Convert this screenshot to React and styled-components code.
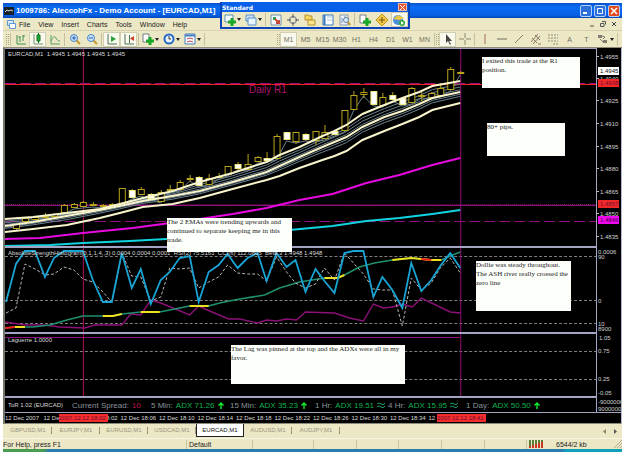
import React, { useState } from 'react'
import styled, { createGlobalStyle, css } from 'styled-components'

const GlobalStyle = createGlobalStyle`
  * { box-sizing: border-box; }
  body {
    margin: 0;
    background: #fff;
    font-family: "Liberation Sans", Arial, sans-serif;
    font-size: 7px;
    line-height: 9px;
    color: #222;
  }
  button {
    font: inherit;
    color: inherit;
    margin: 0;
    padding: 0;
    border: 0;
    background: none;
  }
  svg { display: block; }
`;

const sand = '#ece8c6'

const Window = styled.div`
  position: relative;
  margin: 3px 3px 0;
`;

const TitleBar = styled.header`
  display: flex;
  align-items: center;
  gap: 2px;
  height: 15px;
  padding: 0 2px 0 1px;
  color: #fff;
  background: linear-gradient(#0a50c8, #0a6cf4 25%, #0660e6 80%, #0448b8);
`;

const Title = styled.h1`
  flex: 1;
  margin: 0;
  font-size: 8px;
  line-height: 12px;
  font-weight: bold;
  white-space: nowrap;
`;

const CaptionButton = styled.button`
  display: grid;
  place-items: center;
  width: 12px;
  height: 12px;
  border: 1px solid #b8d0f8;
  border-radius: 2px;
  background: ${p => (p.$close ? '#e0491c' : '#2c70dc')};
`;

const CaptionButtons = styled.div`
  display: flex;
  gap: 2px;
`;

const MenuBar = styled.nav`
  display: flex;
  align-items: center;
  gap: 3px;
  height: 13px;
  padding: 0 5px 0 4px;
  background: ${sand};
  border-bottom: 1px solid #d4d0b0;
`;

const Menus = styled.div`
  display: flex;
  gap: 8px;
`;

const MenuItem = styled.button`
  white-space: nowrap;
`;

const ChildButtons = styled.div`
  display: flex;
  gap: 5px;
  margin-left: auto;
`;

const Toolbar = styled.div`
  display: flex;
  align-items: center;
  justify-content: space-between;
  height: 17px;
  padding: 0 3px;
  background: ${sand};
  border-bottom: 1px solid #8c8a78;
`;

const ToolGroup = styled.div`
  display: flex;
  align-items: center;
`;

const Grip = styled.span`
  width: 3px;
  height: 11px;
  border-left: 1px dotted #a8a488;
  border-right: 1px dotted #a8a488;
`;

const Divider = styled.span`
  width: 1px;
  height: 13px;
  margin: 0 1px;
  background: #c4c0a0;
`;

const ToolButton = styled.button`
  display: flex;
  align-items: center;
  justify-content: center;
  gap: 1px;
  width: ${p => (p.$menu ? 21 : 17)}px;
  height: 15px;
  color: #707060;
  font-size: 7px;
  ${p => p.$on && css`
    background: #faf9ee;
    box-shadow: inset 0 0 0 1px #d2ceb2;
  `}
`;

const Chart = styled.main`
  position: relative;
  background: #000;
  border-left: 2px solid #74746c;
  border-right: 1px solid #b8b8d0;
  border-bottom: 1px solid #8c8a78;
  color: #d8d8d8;
`;

const Pane = styled.section`
  position: relative;
  display: grid;
  grid-template-columns: minmax(0, 1fr) 24px;
  height: ${p => p.$height}px;
`;

const Plot = styled.svg`
  width: 100%;
  height: 100%;
  border-top: ${p => (p.$first ? 1 : 2)}px solid #a4a4c4;
  border-right: 1px solid #a4a4c4;
`;

const Scale = styled.svg`
  width: 24px;
  height: 100%;
  overflow: hidden;
  font-size: 6px;
  fill: #d0d0d0;
`;

const PaneLabel = styled.p`
  position: absolute;
  top: ${p => p.$top}px;
  left: 3px;
  margin: 0;
  font-size: 6px;
  line-height: 7px;
  white-space: pre;
`;

const LevelLabel = styled.span`
  position: absolute;
  top: 36px;
  left: 244px;
  font-size: 10px;
  line-height: 11px;
  color: #b01470;
`;

const Note = styled.aside`
  position: absolute;
  z-index: 1;
  top: ${p => p.$top}px;
  left: ${p => p.$left}px;
  width: ${p => p.$width}px;
  height: ${p => p.$height}px;
  background: #fdfffb;
  color: #222;
  font-family: "Liberation Serif", "Times New Roman", serif;
  font-size: 7px;
  line-height: 9px;
`;

const Trends = styled.div`
  display: flex;
  align-items: center;
  height: 100%;
  padding-left: 3px;
  border-top: 2px solid #a4a4c4;
  border-right: 1px solid #a4a4c4;
  font-size: 8px;
  white-space: nowrap;
`;

const TrendName = styled.span`
  width: 64px;
  font-size: 6px;
`;

const Spread = styled.span`
  width: 79px;
  color: #88949c;
`;

const SpreadValue = styled.b`
  margin-left: 3px;
  font-weight: normal;
  color: #c01058;
`;

const Trend = styled.span`
  display: flex;
  align-items: center;
  gap: 3px;
  width: ${p => p.$width}px;
  color: #88949c;
`;

const Adx = styled.b`
  font-weight: normal;
  color: #10b050;
`;

const TimeAxis = styled.div`
  position: relative;
  height: 11px;
  border-top: 1px solid #a4a4c4;
  font-size: 6px;
  line-height: 10px;
`;

const Ticks = styled.div`
  display: grid;
  grid-template-columns: repeat(12, minmax(0, 1fr));
  width: 75%;
  white-space: nowrap;
`;

const TimeMark = styled.span`
  position: absolute;
  top: 1px;
  left: ${p => p.$left}px;
  width: 49px;
  height: 8px;
  background: #f42c2c;
  color: #701030;
  line-height: 8px;
  white-space: nowrap;
`;

const Tabs = styled.div`
  display: flex;
  height: 14px;
  padding-left: 1px;
  background: ${sand};
`;

const Tab = styled.button`
  width: 48px;
  height: 13px;
  font-size: 6px;
  color: ${p => (p.$on ? '#111' : '#98947c')};
  ${p => (p.$on ? css`
    background: #fff;
    border: 1px solid #222;
    border-top: 0;
  ` : css`
    background: linear-gradient(#98947c, #98947c) right center / 1px 7px no-repeat;
  `)}
`;

const TabArrows = styled.div`
  display: flex;
  align-items: center;
  gap: 7px;
  margin-left: auto;
  padding-right: 4px;
`;

const StatusBar = styled.footer`
  display: grid;
  grid-template-columns: 183fr 66fr 61fr 43fr 42fr 43fr 43fr 42fr 96fr;
  align-items: center;
  height: 11px;
  background: ${sand};
  border-top: 1px solid #f8f6e4;
  white-space: nowrap;
`;

const StatusCell = styled.div`
  display: flex;
  align-items: center;
  gap: 13px;
  height: 9px;
  padding-left: ${p => (p.$first ? 0 : 2)}px;
  border-left: ${p => (p.$first ? 0 : 1)}px solid #c8c4a4;
`;

const SizeGrip = styled.svg`
  margin-left: auto;
`;

const Taskbar = styled.div`
  height: 3px;
  background: linear-gradient(90deg, #4c9c50 0 40px, #2c7cb0 46px 560px, #10a0b8 562px);
`;

const Floating = styled.div`
  position: absolute;
  z-index: 3;
  top: -1px;
  left: 217px;
  width: 190px;
  background: #0a44b8;
  padding: 0 2px 2px;
`;

const FloatingHead = styled.div`
  display: flex;
  align-items: center;
  justify-content: space-between;
  height: 10px;
  padding-right: 1px;
  background: #0860e8;
  color: #fff;
  font-family: "DejaVu Sans", sans-serif;
  font-size: 6px;
  font-weight: bold;
`;

const FloatingClose = styled.button`
  display: grid;
  place-items: center;
  width: 9px;
  height: 8px;
  background: #e0532c;
  border: 1px solid #f0b8a0;
`;

const FloatingBody = styled.div`
  display: flex;
  align-items: center;
  justify-content: space-between;
  height: 15px;
  background: ${sand};
`;

// 12x12 glyphs for the toolbars
const glyphs = {
  bars: <path d="M2 2v9h9M5 3v6M5 4H3.500M8 2v6M8 3h2" stroke="#3c8c50" fill="none" />,
  candles: <><path d="M2 1v10h9" stroke="#709070" fill="none" /><path d="M6.500 0v10" stroke="#107020" /><path d="M5 2h3v6H5z" fill="#18b030" stroke="#107020" /></>,
  line: <path d="M2 2v9h9M2 8c2-5 4-5 5-3s2 3 4 3" stroke="#58a060" fill="none" />,
  zoomIn: <><path d="M7 7l4 4" stroke="#c89828" strokeWidth="2" /><circle cx="5" cy="5" r="3.500" fill="#cce4fc" stroke="#4484cc" /><path d="M3 5h4M5 3v4" stroke="#2464b0" /></>,
  zoomOut: <><path d="M7 7l4 4" stroke="#c89828" strokeWidth="2" /><circle cx="5" cy="5" r="3.500" fill="#cce4fc" stroke="#4484cc" /><path d="M3 5h4" stroke="#2464b0" /></>,
  scroll: <><path d="M2 1v10h9" stroke="#507058" fill="none" /><path d="M5 3l5 3-5 3z" fill="#28a038" /></>,
  shift: <><path d="M2 1v10h9M6.500 2v8" stroke="#507058" fill="none" /><path d="M11 3L7 5.500 11 8z" fill="#d04020" /></>,
  addDoc: <><path d="M1 1h6v8H1z" fill="#fff" stroke="#708088" /><path d="M8 4v8M4 8h8" stroke="#18a828" strokeWidth="3" /></>,
  clock: <><circle cx="6" cy="6" r="4.500" fill="#e8f4ff" stroke="#2468c8" strokeWidth="2" /><path d="M6 3v3h2" stroke="#333" fill="none" /></>,
  template: <><path d="M1 1h10v10H1z" fill="#f4f8ff" stroke="#4880c0" /><path d="M1 2.500h10" stroke="#4880c0" strokeWidth="2" /><path d="M3 6l3-1 3 1M3 9l3-1 3 1" stroke="#c05050" fill="none" /></>,
  newChart: <><path d="M1 1h8v7H1z" fill="#f4faff" stroke="#5890b8" /><path d="M8 4v8M4 8h8" stroke="#18a828" strokeWidth="3" /></>,
  profiles: <><path d="M1 1h8v6H1z" fill="#c8e0f8" stroke="#5890c8" /><path d="M3 4h8v7H3z" fill="#e8f4ff" stroke="#5890c8" /></>,
  market: <><path d="M1 1h10v10H1z" fill="#f4fcff" stroke="#7090a8" /><path d="M3 3h3v3H3z" fill="#28a050" /><path d="M5 5l4 4M9 6v3H6" stroke="#c84838" strokeWidth="2" fill="none" /></>,
  target: <><circle cx="6" cy="6" r="3.500" fill="none" stroke="#687080" /><path d="M6 0v4M6 8v4M0 6h4M8 6h4" stroke="#505868" /></>,
  folder: <><path d="M1 3V1h3l1 1h3v4H1z" fill="#f8d860" stroke="#b89030" /><path d="M4 6h7v5H4z" fill="#fce888" stroke="#b89030" /></>,
  terminal: <><path d="M1 1h10v10H1z" fill="#fff" stroke="#3878c0" /><path d="M2.500 1v10" stroke="#3878c0" strokeWidth="2" /><path d="M5 3h5M5 6h5" stroke="#a8c0d8" /></>,
  tester: <><path d="M1 1h8v10H1z" fill="#e8f0f8" stroke="#8098b0" /><path d="M3 9V4M6 5V2" stroke="#8098b0" /><circle cx="7" cy="6" r="2.500" fill="#d8ecff" stroke="#6080a8" /><path d="M9 8l2 3" stroke="#c09030" strokeWidth="2" /></>,
  meta: <><path d="M6 0l6 6-6 6-6-6z" fill="#f4cc48" stroke="#c09020" /><path d="M6 3v6M3 6h6" stroke="#705010" /></>,
  expert: <><circle cx="5" cy="6" r="5" fill="#4890d8" /><path d="M0 5l5-4 6 3-4 2z" fill="#f0c848" /><circle cx="9" cy="9" r="3" fill="#28a838" /><path d="M8 7l3 2-3 2z" fill="#fff" /></>,
  cursor: <path d="M4 1v9l2-2 2 4 1-1-2-3h3z" fill="#444" />,
  cross: <path d="M6 0v5M6 7v5M0 6h5M7 6h5" stroke="#8c8870" />,
  vline: <path d="M6 1v10" stroke="#a06868" />,
  hline: <path d="M1 6h10" stroke="#706c60" />,
  trend: <path d="M2 10l8-8" stroke="#807c6c" />,
  channel: <path d="M1 9l7-8M3 11l7-8M2 5l5 5M5 2l5 5M8 11h3" stroke="#8c7868" />,
  fibo: <path d="M1 2h10M1 5h10M1 8h10M6 11h5" stroke="#908c78" strokeDasharray="2 1" />,
  label: <path d="M1 1h10v10H1z" stroke="#a8a488" fill="none" strokeDasharray="1 1" />,
  arrows: <><path d="M1 2h4v3H1zM6 7h4v3H6z" fill="#807c70" /><path d="M5 3l3 1-2 2M3 6l3 3" stroke="#807c70" fill="none" /></>,
}

function Glyph({ name, menu }) {
  return (
    <>
      <svg width="12" height="12" viewBox="0 0 12 12">{glyphs[name]}</svg>
      {menu && <svg width="4" height="3" viewBox="0 0 4 3"><path d="M0 0h4L2 3z" fill="#222" /></svg>}
    </>
  )
}

function Tool({ name, menu, on }) {
  return (
    <ToolButton $menu={menu} $on={on} aria-label={name}>
      <Glyph name={name} menu={menu} />
    </ToolButton>
  )
}

const upper = [[5, 219], [33, 217], [67, 213], [100, 209], [120, 204], [143, 198], [173, 191], [200, 182], [233, 173], [267, 162], [280, 155], [300, 147], [323, 136], [335, 131], [347, 125], [363, 114], [385, 105], [403, 98], [420, 92], [433, 86], [461, 81]]
const middle = [[5, 226], [33, 222], [67, 216], [100, 210], [120, 206], [143, 201], [173, 196], [200, 191], [233, 182], [267, 172], [280, 166], [300, 157], [323, 147], [335, 142], [347, 137], [363, 127], [385, 117], [403, 111], [420, 104], [433, 98], [461, 92]]
const lower = [[5, 232], [33, 229], [67, 225], [100, 218], [120, 213], [143, 207], [173, 204], [200, 198], [233, 189], [267, 180], [280, 176], [300, 168], [323, 160], [335, 156], [347, 151], [363, 140], [385, 131], [403, 124], [420, 117], [433, 110], [461, 103]]
const slow = [[5, 239], [40, 238], [83, 233], [133, 228], [163, 224], [200, 219], [233, 214], [267, 208], [300, 200], [333, 194], [367, 183], [400, 175], [433, 165], [461, 158]]
const slowest = [[5, 246], [50, 245], [83, 243], [130, 241], [167, 239], [290, 230], [333, 226], [367, 221], [400, 218], [433, 214], [461, 210]]

const blend = (a, b, t) => a.map(([x, y], i) => [x, y + (b[i][1] - y) * t])
const pts = list => list.map(p => p.join(',')).join(' ')

// top, bottom, high, low, filled
const candles = [
  [224, 228, 223, 229], [218, 221, 217, 222], [217, 219, 216, 220], [216, 217, 213, 219], [214, 216, 213, 217],
  [205, 212, 204, 212], [204, 207, 203, 208], [202, 206, 201, 206], [204, 205, 202, 206], [205, 206, 204, 207],
  [204, 205, 203, 206], [188, 203, 188, 205], [190, 197, 189, 197, 1], [189, 194, 187, 195], [194, 198, 193, 199, 1],
  [192, 201, 190, 202], [189, 190, 185, 191], [182, 189, 180, 190], [178, 179, 175, 181], [177, 185, 176, 185, 1],
  [178, 184, 174, 185], [176, 177, 173, 178], [166, 174, 166, 175], [164, 168, 162, 171, 1], [164, 169, 154, 169],
  [157, 161, 156, 162], [158, 160, 152, 163, 1], [136, 158, 134, 158], [132, 139, 132, 140, 1], [132, 141, 132, 144],
  [134, 139, 133, 141, 1], [131, 140, 131, 145], [132, 138, 125, 139], [131, 134, 130, 135, 1], [110, 130, 110, 131],
  [95, 109, 91, 110], [92, 94, 88, 98], [91, 104, 91, 105, 1], [97, 105, 93, 106], [95, 99, 92, 100, 1],
  [98, 104, 97, 105, 1], [88, 102, 87, 103], [95, 96, 91, 101], [93, 97, 92, 98], [88, 95, 83, 96],
  [69, 89, 67, 90], [72, 73, 71, 74],
]
const slot = i => Math.round(15.5 + i * 9.68)
const fast = candles.map((c, i) => [slot(i), c[1] + 2])

const rsi = [302, 264, 251, 251, 277, 258, 251, 251, 251, 280, 302, 302, 253, 288, 269, 304, 280, 272, 258, 256, 302, 272, 265, 254, 268, 258, 253, 281, 253, 267, 260, 292, 269, 281, 293, 253, 251, 251, 297, 277, 290, 308, 263, 291, 280, 266, 253, 268]
const cci = [313, 308, 264, 269, 275, 274, 267, 270, 279, 282, 292, 302, 253, 276, 277, 301, 297, 268, 269, 268, 288, 282, 277, 265, 273, 274, 274, 281, 257, 272, 283, 288, 284, 268, 280, 253, 263, 274, 289, 290, 290, 326, 278, 290, 283, 268, 258, 273]
const series = list => pts(list.map((y, i) => [slot(i - 1), y]))
const river = [[5, 328], [15, 327], [33, 327], [50, 325], [67, 320], [83, 316], [103, 316], [113, 316], [122, 314], [141, 312], [160, 312], [180, 308], [190, 306], [209, 306], [220, 303], [240, 299], [265, 295], [280, 288], [300, 282], [325, 278], [338, 278], [345, 275], [360, 267], [375, 263], [393, 260], [412, 258], [432, 260], [442, 260], [451, 256], [461, 252]]
const flat = ['15,327 25,327', '103,316 113,316 122,314', '141,312 160,312', '190,306 209,306', '325,278 338,278 345,275', '393,260 412,258 432,260 442,260']
const ashLow = [[5, 322], [25, 325], [44, 325], [60, 327], [85, 328], [95, 325], [122, 325], [131, 314], [141, 315], [151, 300], [161, 303], [190, 315], [199, 306], [210, 311], [229, 319], [240, 319], [258, 323], [267, 320], [277, 321], [287, 319], [297, 320], [306, 312], [335, 313], [350, 318], [364, 321], [374, 304], [384, 308], [393, 307], [403, 304], [413, 307], [422, 298], [451, 312], [461, 313]]

function Crosshair() {
  return (
    <g shapeRendering="crispEdges">
      <path d="M83.500 0V500" stroke="#b01058" />
      <path d="M461.500 0V500" stroke="#90107c" />
    </g>
  )
}

function PricePane() {
  return (
    <Pane $height={198}>
      <Plot $first viewBox="5 49 592 197" preserveAspectRatio="none">
        <g shapeRendering="crispEdges" fill="none">
          <path d="M5 83.500H597" stroke="#98107c" strokeDasharray="11 4" />
          <path d="M5 84.500H597" stroke="#f02020" />
          <path d="M5 205.500H597" stroke="#90107c" />
          <path d="M5 204.500H597" stroke="#80106c" strokeDasharray="1 1" />
          <path d="M5 221.500H597" stroke="#90107c" strokeDasharray="11 4" />
        </g>
        <Crosshair />
        <g fill="none" stroke="#6c8490">
          {[0.3, 0.55, 0.8].map(t => <polyline key={t} points={pts(blend(upper, middle, t))} />)}
          {[0.2, 0.4].map(t => <polyline key={t} points={pts(blend(middle, lower, t))} />)}
          <polyline points={pts(fast)} />
        </g>
        <g shapeRendering="crispEdges" stroke="#b8a418">
          {candles.map(([top, bottom, high, low, filled], i) => (
            <g key={i}>
              <path d={`M${slot(i) + 0.5} ${high}V${low}`} />
              <rect x={slot(i) - 2.5} y={top + 0.5} width="6" height={bottom - top} fill={filled ? '#fff' : '#000'} stroke={filled ? '#f0e878' : '#b8a418'} />
            </g>
          ))}
        </g>
        <g fill="none" strokeWidth="2">
          <polyline points={pts(upper)} stroke="#f8f4cc" />
          <polyline points={pts(middle)} stroke="#f8f4cc" />
          <polyline points={pts(lower)} stroke="#f8f4cc" />
          <polyline points={pts(slow)} stroke="#e808e0" />
          <polyline points={pts(slowest)} stroke="#10d4e0" />
        </g>
      </Plot>
      <Scale viewBox="0 49 24 198">
        {[['1.4955', 58], ['1.4940', 80], ['1.4925', 102], ['1.4910', 125], ['1.4895', 148], ['1.4880', 170], ['1.4865', 193], ['1.4850', 215], ['1.4835', 238]].map(([label, y]) => (
          <g key={label}><path d={`M0 ${y - 0.5}h2`} stroke="#c0c0c0" /><text x="3" y={y + 2}>{label}</text></g>
        ))}
        <rect x="1" y="68" width="21" height="8" fill="#fff" /><text x="3" y="74" fill="#111">1.4945</text>
        <rect x="1" y="80" width="21" height="8" fill="#f02828" /><text x="3" y="86" fill="#701030">1.4938</text>
        <rect x="1" y="201" width="21" height="8" fill="#f02828" /><text x="3" y="207" fill="#701030">1.4857</text>
        <rect x="1" y="217" width="21" height="8" fill="#f008f0" /><text x="3" y="223" fill="#400040">1.4846</text>
      </Scale>
      <PaneLabel $top={3}>EURCAD,M1  1.4945 1.4945 1.4945 1.4945</PaneLabel>
      <LevelLabel>Daily R1</LevelLabel>
    </Pane>
  )
}

function StrengthPane() {
  return (
    <Pane $height={86}>
      <Plot viewBox="5 248 592 84" preserveAspectRatio="none">
        <path d="M5 256.500H597M5 300.500H597M5 323.500H597" stroke="#808080" strokeDasharray="3 2" shapeRendering="crispEdges" />
        <Crosshair />
        <g fill="none">
          <polyline points={pts(ashLow)} stroke="#8c1078" strokeWidth="1.400" />
          <polyline points={pts(river)} stroke="#209070" strokeWidth="1.600" />
          {flat.map(p => <polyline key={p} points={p} stroke="#ece020" strokeWidth="2" />)}
          <path d="M5 328L15 327M422 259L432 260" stroke="#f02020" strokeWidth="2" />
          <polyline points={series(cci)} stroke="#b8b8b8" strokeDasharray="3 2" />
          <polyline points={series(rsi)} stroke="#18a4d4" strokeWidth="1.800" />
        </g>
      </Plot>
      <Scale viewBox="0 246 24 86">
        <text x="1" y="254">0.0006</text>
        <text x="1" y="259">90</text>
        <text x="1" y="303">0</text>
        <text x="1" y="326">10</text>
        <text x="1" y="331">8900</text>
      </Scale>
      <PaneLabel $top={4}>AbsoluteStrengthHistogram(0,1,1,4,,3) 0.0004 0.0004 0.0001  RSI(2) 75.5161  CCI(6) 112.0805  Beta 3 1.4948 1.4948</PaneLabel>
    </Pane>
  )
}

function LaguerrePane() {
  return (
    <Pane $height={64}>
      <Plot viewBox="5 334 592 62" preserveAspectRatio="none">
        <g shapeRendering="crispEdges">
          <path d="M5 351.500H597M5 379.500H597" stroke="#808080" strokeDasharray="3 2" />
          <path d="M5 337.500H461" stroke="#90107c" />
        </g>
        <Crosshair />
      </Plot>
      <Scale viewBox="0 332 24 64">
        <text x="2" y="340">1.05</text>
        <text x="1" y="353">0.75</text>
        <text x="1" y="381">0.25</text>
        <text x="1" y="395">-0.05</text>
      </Scale>
      <PaneLabel $top={5}>Laguerre 1.0000</PaneLabel>
    </Pane>
  )
}

const trends = [
  ['5 Min:', 'ADX 71.26', 'up', 79],
  ['15 Min:', 'ADX 35.23', 'up', 85],
  ['1 Hr:', 'ADX 19.51', 'flat', 73],
  ['4 Hr:', 'ADX 15.95', 'flat', 78],
  ['1 Day:', 'ADX 50.50', 'up', 80],
]

function TrendPane() {
  return (
    <Pane $height={16}>
      <Trends>
        <TrendName>ToR 1.02 (EURCAD)</TrendName>
        <Spread>Current Spread:<SpreadValue>10</SpreadValue></Spread>
        {trends.map(([name, value, dir, width]) => (
          <Trend key={name} $width={width}>
            {name}
            <Adx>{value}</Adx>
            {dir === 'up'
              ? <svg width="6" height="7" viewBox="0 0 6 7"><path d="M3 1v6M0.500 3.500L3 1l2.500 2.500" stroke="#10f030" strokeWidth="1.400" fill="none" /></svg>
              : <svg width="8" height="6" viewBox="0 0 8 6"><path d="M0 2q2-2 4 0t4-1M0 5q2-2 4 0t4-1" stroke="#18a068" fill="none" /></svg>}
          </Trend>
        ))}
      </Trends>
      <Scale viewBox="0 0 24 16">
        <text x="1" y="8">-90000000</text>
        <text x="1" y="15">90000000</text>
      </Scale>
    </Pane>
  )
}

const notes = [
  [9, 477, 98, 31, 'I exited this trade at the R1 position.'],
  [75, 482, 78, 33, '80+ pips.'],
  [170, 162, 125, 34, 'The 2 EMAs were trending upwards and continued to separate keeping me in this trade.'],
  [213, 471, 95, 50, 'Dollie was steady throughout. The ASH river really crossed the zero line'],
  [297, 226, 174, 39, 'The Lag was pinned at the top and the ADXs were all in my favor.'],
]

const times = ['12 Dec 2007', '12 Dec 17:58', '12 Dec 18:02', '12 Dec 18:06', '12 Dec 18:10', '12 Dec 18:14', '12 Dec 18:18', '12 Dec 18:22', '12 Dec 18:26', '12 Dec 18:30', '12 Dec 18:34', '12 Dec 18:38']
const symbols = ['GBPUSD,M1', 'EURJPY,M1', 'EURUSD,M1', 'USDCAD,M1', 'EURCAD,M1', 'AUDUSD,M1', 'AUDJPY,M1']
const frames = ['M1', 'M5', 'M15', 'M30', 'H1', 'H4', 'D1', 'W1', 'MN']

export default function App() {
  const [symbol, setSymbol] = useState('EURCAD,M1')
  const [frame, setFrame] = useState('M1')

  return (
    <>
      <GlobalStyle />
      <Window>
        <TitleBar>
          <svg width="10" height="10" viewBox="0 0 10 10"><path d="M0 1h10v8H0z" fill="#18202c" /><path d="M1 6l2-2 2 1 2-1 2 1" stroke="#e0e0d0" fill="none" /></svg>
          <Title>1009786: AleccohFx - Demo Account - [EURCAD,M1]</Title>
          <CaptionButtons>
            <CaptionButton aria-label="Minimize"><svg width="8" height="8"><path d="M1 6h4" stroke="#fff" strokeWidth="2" /></svg></CaptionButton>
            <CaptionButton aria-label="Maximize"><svg width="8" height="8"><path d="M1.500 1.500h5v5h-5z" stroke="#fff" fill="none" /></svg></CaptionButton>
            <CaptionButton $close aria-label="Close"><svg width="8" height="8"><path d="M1 1l6 6M7 1L1 7" stroke="#fff" strokeWidth="1.500" /></svg></CaptionButton>
          </CaptionButtons>
        </TitleBar>

        <MenuBar>
          <svg width="9" height="9" viewBox="0 0 9 9"><path d="M.5 .5h6v5h-6z" fill="#d8ecff" stroke="#6098d0" /><path d="M2.500 3.500h6v5h-6z" fill="#fff" stroke="#6098d0" /></svg>
          <Menus>
            {['File', 'View', 'Insert', 'Charts', 'Tools', 'Window', 'Help'].map(m => <MenuItem key={m}>{m}</MenuItem>)}
          </Menus>
          <ChildButtons>
            <MenuItem aria-label="Minimize chart"><svg width="6" height="6"><path d="M1 5h4" stroke="#555" /></svg></MenuItem>
            <MenuItem aria-label="Restore chart"><svg width="6" height="6"><path d="M2 .5h3.500v3M.5 2.500h3.500v3H.5z" stroke="#555" fill="none" /></svg></MenuItem>
            <MenuItem aria-label="Close chart"><svg width="6" height="6"><path d="M1 1l4 4M5 1L1 5" stroke="#444" /></svg></MenuItem>
          </ChildButtons>
        </MenuBar>

        <Toolbar>
          <ToolGroup>
            <Grip />
            <Divider />
            <Tool name="bars" /><Tool name="candles" on /><Tool name="line" />
            <Divider />
            <Tool name="zoomIn" /><Tool name="zoomOut" />
            <Divider />
            <Tool name="scroll" on /><Tool name="shift" on />
            <Divider />
            <Tool name="addDoc" menu /><Tool name="clock" menu /><Tool name="template" menu />
            <Divider />
          </ToolGroup>
          <ToolGroup>
            <Grip />
            {frames.map(f => <ToolButton key={f} $on={f === frame} onClick={() => setFrame(f)}>{f}</ToolButton>)}
            <Divider />
            <Grip />
            <Tool name="cursor" on /><Tool name="cross" />
            <Divider />
            <Tool name="vline" /><Tool name="hline" /><Tool name="trend" /><Tool name="channel" /><Tool name="fibo" />
            <ToolButton>A</ToolButton>
            <ToolButton>T</ToolButton>
            <Tool name="arrows" menu />
            <Divider />
          </ToolGroup>
        </Toolbar>

        <Chart>
          <PricePane />
          <StrengthPane />
          <LaguerrePane />
          <TrendPane />
          <TimeAxis>
            <Ticks>{times.map(t => <span key={t}>{t}</span>)}</Ticks>
            <TimeMark $left={54}>2007.12.12 18:02</TimeMark>
            <TimeMark $left={432}>2007.12.12 18:41</TimeMark>
          </TimeAxis>
          {notes.map(([top, left, width, height, text]) => (
            <Note key={top} $top={top} $left={left} $width={width} $height={height}>{text}</Note>
          ))}
        </Chart>

        <Tabs>
          {symbols.map(s => <Tab key={s} $on={s === symbol} onClick={() => setSymbol(s)}>{s}</Tab>)}
          <TabArrows>
            <button aria-label="Previous tab"><svg width="4" height="5"><path d="M3 0v5L0 2.500z" fill="#888470" /></svg></button>
            <button aria-label="Next tab"><svg width="4" height="5"><path d="M0 0v5l3-2.500z" fill="#555" /></svg></button>
          </TabArrows>
        </Tabs>

        <StatusBar>
          <StatusCell $first>For Help, press F1</StatusCell>
          <StatusCell>Default</StatusCell>
          <StatusCell /><StatusCell /><StatusCell /><StatusCell /><StatusCell /><StatusCell />
          <StatusCell>
            <svg width="14" height="8" viewBox="0 0 14 8">
              <path d="M1 0v8M4 0v8M7 0v8M10 0v8M13 0v8" stroke="#5c7c38" strokeWidth="2" />
              <path d="M1 6v2M4 5v3M7 4v4M10 3v5M13 2v6" stroke="#c83820" strokeWidth="2" />
            </svg>
            6544/2 kb
            <SizeGrip width="8" height="8" viewBox="0 0 8 8"><path d="M0 8l8-8M3 8l5-5M6 8l2-2" stroke="#b0ac90" /></SizeGrip>
          </StatusCell>
        </StatusBar>
        <Taskbar />

        <Floating>
          <FloatingHead>
            Standard
            <FloatingClose aria-label="Close toolbar"><svg width="5" height="5"><path d="M0 0l5 5M5 0L0 5" stroke="#fff" /></svg></FloatingClose>
          </FloatingHead>
          <FloatingBody>
            <Tool name="newChart" menu /><Tool name="profiles" menu />
            <Divider />
            <Tool name="market" /><Tool name="target" /><Tool name="folder" /><Tool name="terminal" /><Tool name="tester" />
            <Divider />
            <Tool name="addDoc" /><Tool name="meta" /><Tool name="expert" on />
          </FloatingBody>
        </Floating>
      </Window>
    </>
  )
}
